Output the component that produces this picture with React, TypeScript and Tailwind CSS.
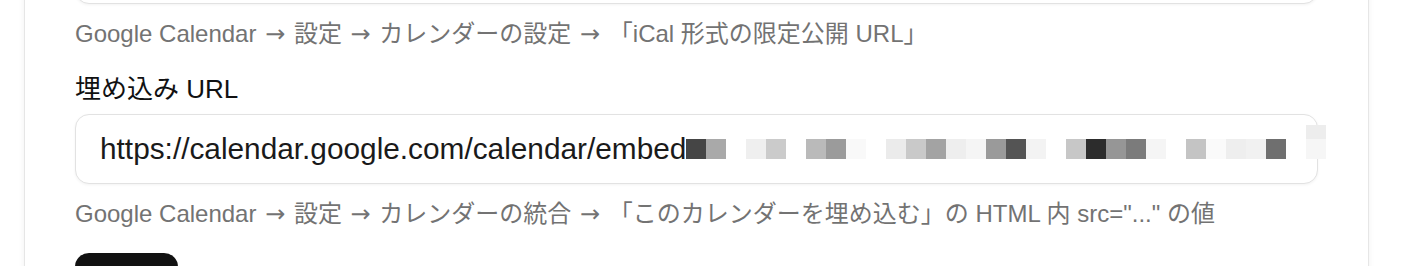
import React from 'react';

// redacted part of the embed URL (pixel mosaic, 20px cells)
const mosaic: (string | null)[] = [
    '#454545', '#a9a9a9', null, '#efefef', '#cbcbcb', null, '#bababa', '#9b9b9b',
    '#f9f9f9', null, '#ebebeb', '#c9c9c9', '#a3a3a3', '#eeeeee', '#f5f5f5', '#9a9a9a',
    '#545454', '#f3f3f3', null, '#c7c7c7', '#2c2c2c', '#969696', '#7b7b7b', '#f5f5f5',
    null, '#c4c4c4', '#fafafa', '#eeeeee', '#f1f1f1', '#6f6f6f', null, '#f6f6f6',
];

const Arrow = () => (
    <span className="inline-block mx-[2px] leading-none align-baseline font-['DejaVu_Sans',sans-serif] text-[24px]">→</span>
);

const Helper: React.FC<{ parts: string[] }> = ({ parts }) => (
    <p className="mt-[14px] h-[32px] text-[24px] leading-[32px] text-[#737373] whitespace-nowrap">
        {parts.map((p, i) => (
            <React.Fragment key={i}>
                {i > 0 && <> <Arrow /> </>}
                {p}
            </React.Fragment>
        ))}
    </p>
);

export default function App() {
    return (
        <div className="min-h-screen bg-white overflow-hidden font-['Liberation_Sans','Noto_Sans_CJK_JP',sans-serif]">
            <div className="-mt-[67px] ml-[24px] w-[1345px] bg-white border border-[#e6e6e6] shadow-[0_0_6px_rgba(0,0,0,0.06)] px-[50px] pb-[40px]">
                {/* previous field */}
                <div className="h-[70px] rounded-[14px] border border-[#e2e2e2] bg-white shadow-[0_1px_3px_rgba(0,0,0,0.05)]" />
                <Helper parts={['Google Calendar', '設定', 'カレンダーの設定', '「iCal 形式の限定公開 URL」']} />

                <label className="block mt-[23px] text-[26px] leading-[32px] text-[#111]">埋め込み URL</label>
                <div className="mt-[9px] h-[70px] rounded-[14px] border border-[#e2e2e2] bg-white shadow-[0_1px_3px_rgba(0,0,0,0.05)] pl-[24px] flex items-center">
                    <span className="shrink-0 whitespace-nowrap text-[29.8px] leading-none text-[#1a1a1a]">
                        https://calendar.google.com/calendar/embed
                    </span>
                    <div className="flex shrink-0 -mt-[1px]">
                        {mosaic.map((c, i) => (
                            <span
                                key={i}
                                className="relative block w-[20px] h-[20px]"
                                style={{ backgroundColor: c ?? '#ffffff' }}
                            >
                                {i === mosaic.length - 1 && (
                                    <span className="absolute left-0 -top-[14px] w-[20px] h-[14px] bg-[#ededed]" />
                                )}
                            </span>
                        ))}
                    </div>
                </div>
                <Helper parts={['Google Calendar', '設定', 'カレンダーの統合', '「このカレンダーを埋め込む」の HTML 内 src="..." の値']} />

                <button className="mt-[23px] w-[103px] h-[52px] rounded-[14px] bg-[#111111] text-white text-[24px]">保存</button>
            </div>
        </div>
    );
}
